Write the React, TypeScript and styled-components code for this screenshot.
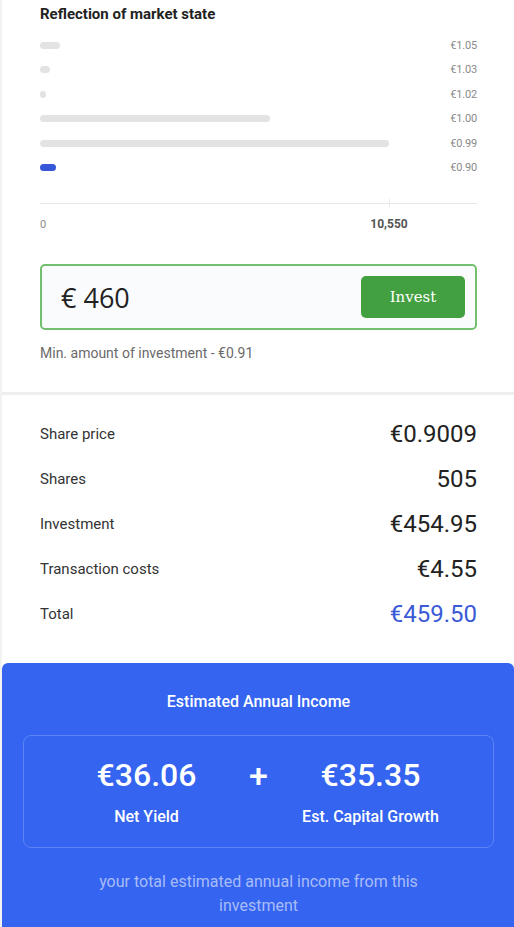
import styled, { createGlobalStyle } from "styled-components";

const GlobalStyle = createGlobalStyle`
  body {
    margin: 0;
    background: #ffffff;
    font-family: Roboto, "Liberation Sans", sans-serif;
  }
`;

const Page = styled.div`
  width: 512px;
  min-height: 927px;
  border-left: 2px solid #f2f2f2;
  background: #ffffff;
  display: flex;
  flex-direction: column;
`;

const TopSection = styled.section`
  padding: 4px 37px 31px 38px;
`;

const Title = styled.h2`
  margin: 0;
  font-size: 15px;
  line-height: 20px;
  font-weight: 700;
  color: #222;
`;

const Chart = styled.div`
  margin-top: 9px;
  display: flex;
  flex-direction: column;
`;

const BarRow = styled.div`
  height: 24.5px;
  display: flex;
  align-items: center;
`;

const BarArea = styled.div`
  flex: 1;
  display: flex;
  align-items: center;
`;

const Bar = styled.div<{ $active?: boolean }>`
  height: 7px;
  min-width: 6px;
  border-radius: 4px;
  background: ${(p) => (p.$active ? "#3557d8" : "#e3e3e3")};
`;

const PriceLabel = styled.span`
  width: 60px;
  text-align: right;
  font-size: 11px;
  color: #8a8a8a;
  letter-spacing: -0.2px;
`;

const Axis = styled.div`
  margin-top: 23px;
  height: 1px;
  background: #e8e8e8;
  position: relative;
`;

const Tick = styled.span`
  position: absolute;
  top: -4px;
  left: 349px;
  width: 1px;
  height: 8px;
  background: #e8e8e8;
`;

const AxisLabels = styled.div`
  position: relative;
  height: 20px;
  margin-top: 14px;
  font-size: 11px;
  color: #8a8a8a;
`;

const AxisMax = styled.span`
  position: absolute;
  left: 349px;
  top: -1px;
  transform: translateX(-50%);
  font-size: 12px;
  font-weight: 700;
  color: #555;
`;

const InvestBox = styled.div`
  margin-top: 26px;
  height: 62px;
  border: 2px solid #72bf6f;
  border-radius: 5px;
  background: #fafbfc;
  display: flex;
  align-items: center;
  justify-content: space-between;
  padding: 0 10px 0 19px;
`;

const Amount = styled.span`
  font-family: "Open Sans", Roboto, sans-serif;
  font-size: 27px;
  color: #222;
`;

const InvestButton = styled.button`
  width: 104px;
  height: 42px;
  border: none;
  border-radius: 5px;
  background: #43a040;
  color: #fff;
  font-family: "DejaVu Serif", "Liberation Serif", serif;
  font-size: 15px;
  cursor: pointer;
`;

const MinNote = styled.p`
  margin: 15px 0 0;
  font-size: 14px;
  color: #6a6a6a;
`;

const Divider = styled.hr`
  margin: 0;
  border: none;
  height: 3px;
  background: #eeeeee;
`;

const Summary = styled.section`
  padding: 16px 37px 27px 38px;
`;

const SummaryRow = styled.div`
  height: 45px;
  display: flex;
  align-items: center;
  justify-content: space-between;
`;

const RowLabel = styled.span`
  font-size: 15px;
  color: #333;
`;

const RowValue = styled.span<{ $accent?: boolean }>`
  font-size: 24px;
  color: ${(p) => (p.$accent ? "#3a5ad6" : "#222")};
`;

const IncomePanel = styled.section`
  flex: 1;
  background: #3464f0;
  border-top-left-radius: 6px;
  border-top-right-radius: 6px;
  padding: 28px 20px 0 21px;
  color: #fff;
  text-align: center;
`;

const PanelTitle = styled.h3`
  margin: 0;
  font-size: 16px;
  line-height: 22px;
  font-weight: 500;
`;

const IncomeBox = styled.div`
  margin-top: 22px;
  height: 113px;
  box-sizing: border-box;
  border: 1px solid rgba(255, 255, 255, 0.2);
  border-radius: 8px;
  padding: 20px 20px 0;
  display: grid;
  grid-template-columns: 1fr auto 1fr;
  align-items: start;
`;

const IncomeItem = styled.div`
  display: flex;
  flex-direction: column;
  align-items: center;
`;

const IncomeValue = styled.span`
  font-size: 32px;
  line-height: 38px;
  font-weight: 500;
`;

const IncomeLabel = styled.span`
  margin-top: 13px;
  font-size: 16px;
  line-height: 19px;
  font-weight: 500;
`;

const Plus = styled.span`
  font-size: 34px;
  line-height: 38px;
  font-weight: 500;
`;

const PanelNote = styled.p`
  margin: 22px auto 0;
  max-width: 370px;
  font-size: 16px;
  line-height: 24px;
  color: rgba(255, 255, 255, 0.58);
`;

interface IBar {
  price: string;
  volume: number;
  active?: boolean;
}

const MAX_VOLUME = 10550;
const SCALE_WIDTH = 349;

const bars: IBar[] = [
  { price: "€1.05", volume: 600 },
  { price: "€1.03", volume: 300 },
  { price: "€1.02", volume: 150 },
  { price: "€1.00", volume: 6950 },
  { price: "€0.99", volume: 10550 },
  { price: "€0.90", volume: 480, active: true },
];

const rows = [
  { label: "Share price", value: "€0.9009" },
  { label: "Shares", value: "505" },
  { label: "Investment", value: "€454.95" },
  { label: "Transaction costs", value: "€4.55" },
  { label: "Total", value: "€459.50", accent: true },
];

function App() {
  return (
    <Page>
      <GlobalStyle />
      <TopSection>
        <Title>Reflection of market state</Title>
        <Chart>
          {bars.map((bar) => (
            <BarRow key={bar.price}>
              <BarArea>
                <Bar
                  $active={bar.active}
                  style={{ width: (bar.volume / MAX_VOLUME) * SCALE_WIDTH }}
                />
              </BarArea>
              <PriceLabel>{bar.price}</PriceLabel>
            </BarRow>
          ))}
        </Chart>
        <Axis>
          <Tick />
        </Axis>
        <AxisLabels>
          0<AxisMax>10,550</AxisMax>
        </AxisLabels>
        <InvestBox>
          <Amount>€ 460</Amount>
          <InvestButton>Invest</InvestButton>
        </InvestBox>
        <MinNote>Min. amount of investment - €0.91</MinNote>
      </TopSection>
      <Divider />
      <Summary>
        {rows.map((row) => (
          <SummaryRow key={row.label}>
            <RowLabel>{row.label}</RowLabel>
            <RowValue $accent={row.accent}>{row.value}</RowValue>
          </SummaryRow>
        ))}
      </Summary>
      <IncomePanel>
        <PanelTitle>Estimated Annual Income</PanelTitle>
        <IncomeBox>
          <IncomeItem>
            <IncomeValue>€36.06</IncomeValue>
            <IncomeLabel>Net Yield</IncomeLabel>
          </IncomeItem>
          <Plus>+</Plus>
          <IncomeItem>
            <IncomeValue>€35.35</IncomeValue>
            <IncomeLabel>Est. Capital Growth</IncomeLabel>
          </IncomeItem>
        </IncomeBox>
        <PanelNote>your total estimated annual income from this investment</PanelNote>
      </IncomePanel>
    </Page>
  );
}

export default App;
